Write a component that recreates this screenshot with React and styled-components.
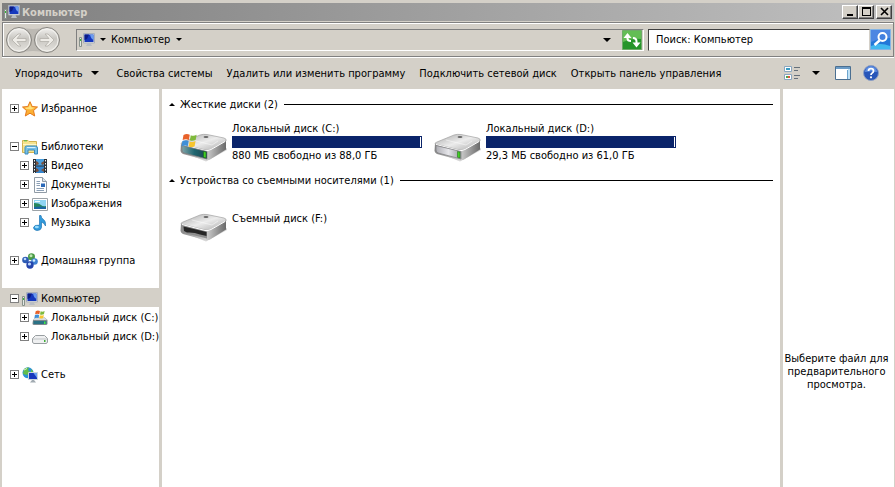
import { useState } from "react";
import styled, { createGlobalStyle } from "styled-components";

const GlobalStyle = createGlobalStyle`
  * {
    box-sizing: border-box;
  }

  body {
    margin: 0;
    background: #d4d0c8;
  }

  body, button, input {
    font-family: "DejaVu Sans Condensed", Tahoma, sans-serif;
    font-size: 11px;
    line-height: 13px;
    color: #000;
  }
`;

const favorites = [{ name: "Избранное", icon: "star" }];
const libraries = [
  { name: "Библиотеки", icon: "library", open: true },
  { name: "Видео", icon: "video", child: true },
  { name: "Документы", icon: "document", child: true },
  { name: "Изображения", icon: "picture", child: true },
  { name: "Музыка", icon: "music", child: true },
];
const homegroup = [{ name: "Домашняя группа", icon: "homegroup" }];
const computer = [
  { name: "Компьютер", icon: "computer", open: true, selected: true },
  { name: "Локальный диск (C:)", icon: "systemDisk", child: true },
  { name: "Локальный диск (D:)", icon: "disk", child: true },
];
const network = [{ name: "Сеть", icon: "network" }];

const tree = [favorites, libraries, homegroup, computer, network];

const commands = [
  "Свойства системы",
  "Удалить или изменить программу",
  "Подключить сетевой диск",
  "Открыть панель управления",
];

const hardDisks = [
  { name: "Локальный диск (C:)", free: "880 МБ свободно из 88,0 ГБ", used: 99.5, kind: "system" },
  { name: "Локальный диск (D:)", free: "29,3 МБ свободно из 61,0 ГБ", used: 99.5, kind: "disk" },
];
const removable = [{ name: "Съемный диск (F:)", kind: "removable" }];

const Flag = () => (
  <g>
    <path d="M2 1.5Q4.500 0 7 1.300L6.300 5Q4 4 1.300 5Z" fill="#e8622a" />
    <path d="M7.800 1.600Q10 2.600 12.500 1.300L11.700 5Q9.500 6 7.100 5.200Z" fill="#7fb93c" />
    <path d="M1.100 5.800Q3.700 4.700 6.100 5.800L5.400 9.400Q3 8.500 .4 9.600Z" fill="#3f8fd8" />
    <path d="M6.900 6.100Q9.300 7 11.600 5.800L10.900 9.400Q8.500 10.600 6.200 9.700Z" fill="#f7c52e" />
  </g>
);

const icons = {
  star: (
    <>
      <path d="M8 .7 10.200 5.500 15.500 6 11.500 9.600 12.700 15 8 12.200 3.300 15 4.500 9.600.5 6 5.800 5.500Z" fill="#fbb034" stroke="#e5791c" />
      <path d="M8 2.800 9.500 6.300 13 6.700 9 8.500 4 8 3 6.700 6.500 6.300Z" fill="#ffe17a" />
    </>
  ),
  library: (
    <>
      <path d="M.5 3.500V1.500H6L7 2.500H14.500V13.500H.5Z" fill="#f6e38d" stroke="#d3b251" />
      <path d="M2 1.800H5" stroke="#49b749" />
      <path d="M1 5.500H14.500" stroke="#fff7c9" />
      <path d="M3 15V8.500Q3 7 4.500 7H13.500Q15.500 7 15.500 9V15H12.500V11H6V15Z" fill="#76bfe6" stroke="#3b8bbd" />
      <path d="M5 8.500H13.500" stroke="#d5f0ff" />
    </>
  ),
  video: (
    <>
      <path d="M1 1H15V15H1Z" fill="#2d3238" />
      <path d="M4 1H12V7.500H4Z" fill="#4aa0e0" />
      <path d="M4 8.500H12V15H4Z" fill="#3486cf" />
      <path d="M4 3 6 4 7 6 5 7H4ZM12 3V6L10 7 9 5ZM4 10 6 11 7 13 5 14H4ZM12 10V14L9 12Z" fill="#77513f" />
      <path d="M2.500 2V15M13.500 2V15" stroke="#eef4f6" strokeDasharray="1.500 1.500" />
    </>
  ),
  document: (
    <>
      <path d="M2.500.5H10.500L14.500 4.500V15.500H2.500Z" fill="#fdfeff" stroke="#909ba5" />
      <path d="M10.500.5V4.500H14.500" fill="#dce5ec" stroke="#909ba5" />
      <path d="M4.500 4.500H8M4.500 6.500H8M4.500 8.500H8M4.500 11.500H12M4.500 13.500H12" stroke="#8b9fb5" />
      <path d="M9 6.500H13V10H9Z" fill="#2968b8" />
    </>
  ),
  picture: (
    <>
      <path d="M.5 2.500H15.500V14.500H.5Z" fill="#fff" stroke="#9ca3a8" />
      <path d="M2 4H14V13H2Z" fill="#8fd5f3" />
      <path d="M2 7Q7 7 9 9T14 10V13H2Z" fill="#25865c" />
      <path d="M2 11Q8 10 14 11V13H2Z" fill="#1a66a2" />
      <path d="M3 5.500H8" stroke="#effaff" />
    </>
  ),
  music: (
    <>
      <path d="M7.500.5H9Q9 3 11.500 4.500T13.500 11Q12.500 8 9.500 7V12.500Q9 15.500 5 15.500 1.500 15 1.500 12.500 2.500 9.500 7.500 10.200Z" fill="#319bdc" stroke="#2075b5" strokeWidth=".7" />
      <ellipse cx="4.800" cy="12" rx="2" ry="1.300" fill="#98dbfb" />
    </>
  ),
  homegroup: (
    <>
      <path d="M4 8 9 4 12 7 9 12Z" fill="none" stroke="#6f98c9" strokeWidth="2" />
      <circle cx="3.500" cy="7" r="3.300" fill="#2d5cb4" />
      <circle cx="9.500" cy="3.700" r="3.500" fill="#4a9a46" />
      <circle cx="12.500" cy="8.500" r="3.300" fill="#3e80d2" />
      <circle cx="8" cy="12" r="3.700" fill="#2444ac" />
      <circle cx="9" cy="2.800" r="1.500" fill="#c0e8b5" />
      <circle cx="3" cy="6" r="1.300" fill="#b9d6fb" />
      <circle cx="7.500" cy="11" r="1.600" fill="#b9d6fb" />
      <circle cx="12" cy="7.500" r="1.300" fill="#d2eaff" />
    </>
  ),
  computer: (
    <>
      <path d="M.5 5.500H2.500V14.500H.5Z" fill="#e3e8e3" stroke="#87918b" />
      <path d="M1.500 7V9" stroke="#36b936" />
      <path d="M4.500 1.500H15.500V11H4.500Z" fill="#e2e5e8" stroke="#abb1b8" />
      <path d="M5.500 2.500H14.500V10H5.500Z" fill="#1638bd" />
      <path d="M5.500 2.500H10L8 7 5.500 8Z" fill="#0c1c86" />
      <path d="M11 2.500H14.500V8Q12 7 11 2.500Z" fill="#6c9df0" />
      <path d="M8.500 11H11.500L13 14H7Z" fill="#b9bec4" />
    </>
  ),
  systemDisk: (
    <>
      <path d="M1 10 4 7H12L15.500 10V14Q15 15 14 15H2Q.5 15 .5 13.500Z" fill="#7e898e" />
      <path d="M1 10 4 7H12L15 10Z" fill="#d8dcdf" />
      <path d="M1.500 11H14.500V14H1.500Z" fill="#2b7185" />
      <path d="M12 11.500H13.500V14H12Z" fill="#42e746" />
      <g transform="translate(2 0) scale(.85)"><Flag /></g>
    </>
  ),
  disk: (
    <>
      <path d="M3.500 6.500H12.500L15.500 9.500V13Q15 14.500 14 14.500H2Q.5 14 .5 13V9.500Z" fill="#eff0f1" stroke="#999ea1" />
      <path d="M1 10H15" stroke="#bfc3c5" />
      <path d="M12 11H13.500V13H12Z" fill="#3fad38" />
    </>
  ),
  network: (
    <>
      <circle cx="6" cy="5.800" r="5.500" fill="#2c93d5" />
      <path d="M2 2Q4 .3 7 .5L6 3 8 5 5 8 1 7ZM9 2 11.500 5 9 6Z" fill="#63bd4a" />
      <path d="M2 3 5 1.500" stroke="#ddf5ca" />
      <path d="M6.500 5.500H15.500V12.500H6.500Z" fill="#1737bd" stroke="#cbd5dd" />
      <path d="M11.500 6H15V11Z" fill="#6ba0f0" />
      <path d="M10 13H12L14 15.500H8Z" fill="#a2abb2" />
    </>
  ),
};

const SmallIcon = ({ name }) => (
  <IconSvg viewBox="0 0 16 16" aria-hidden="true">
    {icons[name]}
  </IconSvg>
);

const DriveIcon = ({ kind }) => (
  <DriveSvg viewBox="0 0 48 29" $raised={kind !== "removable"} aria-hidden="true">
    <defs>
      <linearGradient id={`top-${kind}`} x1="0" y1="0" x2="1" y2="1">
        <stop offset="0" stopColor="#a8a8a8" />
        <stop offset=".5" stopColor="#ececec" />
        <stop offset="1" stopColor="#aaa" />
      </linearGradient>
      <linearGradient id={`side-${kind}`}>
        <stop offset="0" stopColor="#888" />
        <stop offset=".55" stopColor="#d2d2d2" />
        <stop offset="1" stopColor="#6a6a6a" />
      </linearGradient>
      <linearGradient id={`front-${kind}`}>
        <stop offset="0" stopColor={kind === "system" ? "#7fa3a8" : "#aeaeb4"} />
        <stop offset=".5" stopColor={kind === "system" ? "#1f6670" : "#e6e6ea"} />
        <stop offset="1" stopColor={kind === "system" ? "#1c444c" : "#9c9ca4"} />
      </linearGradient>
    </defs>
    <path d="M2 19 26 28.500 47 17V15L28 25Z" fill="#bbb" opacity=".6" />
    <path d="M1 10.500 28 15 46 7.500V16.500L30 26.500Q28 27.500 25 27L3 21Q1 20 .5 18Z" fill={`url(#side-${kind})`} />
    <path d="M1 11Q1 9.500 3 9L20 2Q23 1 27 1.500L44 5Q47 6 46 8L31 16.500Q28 18 25 17Z" fill={`url(#top-${kind})`} stroke="#a2a2a2" strokeWidth=".7" />
    <path d="M2 11.500 25 17.500Q28 18 31 16.500L45 8.500" fill="none" stroke="#fff" />
    <path d="M12 7 32 12 38 8" fill="none" stroke="#fff" strokeWidth=".6" opacity=".8" />
    <ellipse cx="26" cy="4" rx="2.500" ry="1" fill="#666" />
    {kind === "removable" ? (
      <>
        <path d="M2 12.500 27 18.500V25.500L4 20Q2 19 2 17Z" fill="#8d8d8d" />
        <path d="M3.500 13.500 26.500 19V23L20 21.500Q14 19 7 19.500L4 18Z" fill="#262626" />
      </>
    ) : (
      <>
        <path d="M2 12.500 27 18.500V26L4 20Q2 19 2 17Z" fill={`url(#front-${kind})`} stroke="#7c7c80" strokeWidth=".7" />
        <path d="M23.500 18.500 26 19V25L23.500 24.300Z" fill="#42cf24" stroke="#1a6514" strokeWidth=".5" />
      </>
    )}
    {kind === "system" && <g transform="translate(1 0) scale(1.250 1.400)"><Flag /></g>}
  </DriveSvg>
);

const Triangle = ({ size = 8, up }) => (
  <TriangleSvg $size={size} viewBox="0 0 8 4" aria-hidden="true">
    <path d={up ? "M0 4 4 0 8 4Z" : "M0 0H8L4 4Z"} />
  </TriangleSvg>
);

const TravelIcon = () => (
  <svg width="57" height="28" viewBox="0 0 57 28" aria-hidden="true">
    <defs>
      <linearGradient id="travel" x2="0" y2="1">
        <stop offset="0" stopColor="#f3f2f0" />
        <stop offset=".45" stopColor="#c8c6c1" />
        <stop offset="1" stopColor="#e6e4df" />
      </linearGradient>
    </defs>
    <path d="M14 1Q28 5 42 1V27Q28 23 14 27Z" fill="#bcb9b3" />
    {[14, 42].map((x) => (
      <g key={x}>
        <circle cx={x} cy="14" r="12.500" fill="url(#travel)" stroke="#85837e" />
        <circle cx={x} cy="14" r="11" fill="none" stroke="#f3f2ee" />
      </g>
    ))}
    <g fill="#eeece7" stroke="#b3b0a9" strokeWidth=".8">
      <path d="M7 14 13 8H16L12 12.500H21V15.500H12L16 20H13Z" />
      <path d="M49 14 43 8H40L44 12.500H35V15.500H44L40 20H43Z" />
    </g>
  </svg>
);

const TreeRow = ({ item }) => {
  const [open, setOpen] = useState(Boolean(item.open));

  return (
    <Row $selected={item.selected} $child={item.child}>
      <Expander
        type="button"
        aria-label={item.name}
        aria-expanded={open}
        onClick={() => setOpen(!open)}
      >
        <svg width="7" height="7" viewBox="0 0 7 7" shapeRendering="crispEdges">
          <path d={open ? "M1 3H6V4H1Z" : "M1 3H3V1H4V3H6V4H4V6H3V4H1Z"} />
        </svg>
      </Expander>
      <RowLink href="#">
        <SmallIcon name={item.icon} />
        {item.name}
      </RowLink>
    </Row>
  );
};

const DriveSection = ({ title, drives, roomy }) => (
  <section>
    <SectionHeader>
      <SectionToggle type="button" aria-expanded="true">
        <Triangle size={6} up />
        {title}
      </SectionToggle>
      <Rule />
    </SectionHeader>
    <Drives $roomy={roomy}>
      {drives.map((drive) => (
        <Drive key={drive.name}>
          <DriveIcon kind={drive.kind} />
          <DriveInfo>
            <div>{drive.name}</div>
            {drive.free && (
              <>
                <Meter>
                  <MeterFill style={{ width: `${drive.used}%` }} />
                </Meter>
                <div>{drive.free}</div>
              </>
            )}
          </DriveInfo>
        </Drive>
      ))}
    </Drives>
  </section>
);

export default function App() {
  return (
    <Window>
      <GlobalStyle />
      <TitleBar>
        <SmallIcon name="computer" />
        <Title>Компьютер</Title>
        <CaptionButton type="button" aria-label="Свернуть">
          <svg width="11" height="10" shapeRendering="crispEdges"><path d="M2 7H8V9H2Z" /></svg>
        </CaptionButton>
        <CaptionButton type="button" aria-label="Развернуть">
          <svg width="11" height="10" shapeRendering="crispEdges"><path d="M1 0H10V9H1ZM2 2V8H9V2Z" fillRule="evenodd" /></svg>
        </CaptionButton>
        <CaptionButton type="button" aria-label="Закрыть" $apart>
          <svg width="11" height="10"><path d="M2 1 9 8M9 1 2 8" stroke="#000" strokeWidth="1.600" /></svg>
        </CaptionButton>
      </TitleBar>

      <NavBar>
        <TravelButton type="button" aria-label="Назад и вперед">
          <TravelIcon />
        </TravelButton>
        <AddressBar>
          <SmallIcon name="computer" />
          <Crumb type="button" aria-label="Путь"><Triangle size={6} /></Crumb>
          <Crumb type="button">Компьютер <Triangle size={6} /></Crumb>
          <History type="button" aria-label="Предыдущие расположения"><Triangle /></History>
          <IconButton type="button" aria-label="Обновить">
            <svg width="20" height="20" viewBox="0 0 20 20">
              <path d="M.5.5H19.500V19.500H.5Z" fill="#26952a" stroke="#6eaa68" />
              <path d="M1 1H19V9Q10 8 1 12Z" fill="#63bd55" />
              <g fill="none" stroke="#fff" strokeWidth="2">
                <path d="M5.500 6V8.500Q5.500 11 9 11" />
                <path d="M14.500 14V11.500Q14.500 8 11 8" />
              </g>
              <path d="M1.500 8 5.500 3 9.500 8ZM10.500 12.500H18.500L14.500 17.500Z" fill="#fff" />
            </svg>
          </IconButton>
        </AddressBar>
        <Search>
          <SearchInput type="text" aria-label="Поиск" defaultValue="Поиск: Компьютер" />
          <IconButton type="button" aria-label="Найти">
            <svg width="21" height="21" viewBox="0 0 21 21">
              <path d="M.5.5H20.500V20.500H.5Z" fill="#2377d8" stroke="#83b4e5" />
              <path d="M1 1H20V9Q10 9 1 13Z" fill="#4c86e2" />
              <path d="M1 17Q10 13 20 17V20H1Z" fill="#41b8ef" />
              <path d="M9.500 11.500 4.500 16" stroke="#fff" strokeWidth="2.500" />
              <circle cx="12.500" cy="8" r="4" fill="#4380df" stroke="#fff" strokeWidth="2" />
            </svg>
          </IconButton>
        </Search>
      </NavBar>

      <Toolbar>
        <Command type="button" $menu>Упорядочить <Triangle /></Command>
        {commands.map((command) => (
          <Command type="button" key={command}>{command}</Command>
        ))}
        <Tools>
          <IconButton type="button" aria-label="Вид">
            <svg width="16" height="16" viewBox="0 0 16 16">
              <path d="M.5 1.500H7.500V6.500H.5ZM.5 9.500H7.500V14.500H.5Z" fill="#fff" stroke="#8aa6bf" />
              <path d="M2 3H6V5H2Z" fill="#3a9cc4" />
              <path d="M2 11H4V13H2Z" fill="#4ca64d" /><path d="M4 11H6V13H4Z" fill="#e25537" />
              <path d="M10 2.500H16M10 5.500H14M10 10.500H16M10 13.500H14" stroke="#65707b" />
            </svg>
          </IconButton>
          <IconButton type="button" aria-label="Другие виды"><Triangle /></IconButton>
          <PreviewToggle type="button" aria-label="Область просмотра">
            <svg width="16" height="14" viewBox="0 0 16 14">
              <path d="M.5.5H15.500V13.500H.5Z" fill="#fff" stroke="#4b6f91" />
              <path d="M1 1H15V3H1Z" fill="#6b9bc6" />
              <path d="M12.500 4V13" stroke="#6da5ce" />
              <path d="M13 3H15V13H13Z" fill="#bfe1f6" />
            </svg>
          </PreviewToggle>
          <IconButton type="button" aria-label="Справка">
            <svg width="16" height="16" viewBox="0 0 16 16">
              <circle cx="8" cy="8" r="7.500" fill="#2856b9" stroke="#8d9fc4" />
              <path d="M2 7A6 6 0 0 1 14 7Q8 6 2 7Z" fill="#5d8de0" />
              <path d="M5.500 6Q5.500 3.700 8 3.700T10.500 6Q10.500 7.200 9.200 8 8 8.600 8 10" fill="none" stroke="#fff" strokeWidth="1.800" />
              <circle cx="8" cy="12.300" r="1.100" fill="#fff" />
            </svg>
          </IconButton>
        </Tools>
      </Toolbar>

      <Body>
        <Sidebar>
          {tree.map((group) => (
            <TreeGroup key={group[0].name}>
              {group.map((item) => <TreeRow key={item.name} item={item} />)}
            </TreeGroup>
          ))}
        </Sidebar>
        <Content>
          <DriveSection title="Жесткие диски (2)" drives={hardDisks} />
          <DriveSection title="Устройства со съемными носителями (1)" drives={removable} roomy />
        </Content>
        <Preview>Выберите файл для предварительного просмотра.</Preview>
      </Body>
    </Window>
  );
}

const Window = styled.div`
  display: flex;
  flex-direction: column;
  min-height: 100vh;
  padding: 3px 1px 0 2px;
  background: #d4d0c8;
`;

const IconSvg = styled.svg`
  flex: none;
  width: 16px;
  height: 16px;
`;

const TriangleSvg = styled.svg`
  flex: none;
  width: ${(p) => p.$size}px;
  height: ${(p) => p.$size / 2}px;
`;

const PlainButton = styled.button`
  display: flex;
  align-items: center;
  padding: 0;
  border: 0;
  background: none;
  white-space: nowrap;
`;

const TitleBar = styled.header`
  display: flex;
  align-items: center;
  height: 18px;
  padding: 0 2px;
  background: linear-gradient(to right, #808080, #c0c0c0);
`;

const Title = styled.h1`
  flex: 1;
  margin: 0 0 0 2px;
  font-size: 11px;
  color: #d4d0c8;
`;

const CaptionButton = styled(PlainButton)`
  justify-content: center;
  width: 16px;
  height: 14px;
  margin-left: ${(p) => (p.$apart ? 2 : 0)}px;
  border: 1px solid;
  border-color: #fff #404040 #404040 #fff;
  box-shadow: inset -1px -1px #808080;
  background: #d4d0c8;
`;

const NavBar = styled.nav`
  display: flex;
  align-items: center;
  height: 35px;
  margin-top: 1px;
  padding: 0 2px;
  border: 1px solid #808080;
  box-shadow: inset 1px 1px #fff, 0 1px #fff;
`;

const TravelButton = styled(PlainButton)`
  margin-right: 14px;
`;

const AddressBar = styled.div`
  display: flex;
  flex: 1;
  align-items: center;
  height: 22px;
  padding: 0 1px 0 2px;
  border: 1px solid;
  border-color: #808080 #fff #fff #808080;
`;

const Crumb = styled(PlainButton)`
  gap: 6px;
  margin-left: 5px;
`;

const History = styled(PlainButton)`
  margin: 0 11px 0 auto;
`;

const IconButton = styled(PlainButton)`
  flex: none;
`;

const Search = styled.div`
  display: flex;
  align-items: center;
  width: 243px;
  margin-left: 4px;
`;

const SearchInput = styled.input`
  flex: 1;
  min-width: 0;
  height: 22px;
  padding: 0 7px;
  border: 1px solid;
  border-color: #404040 #d4d0c8 #d4d0c8 #404040;
  border-radius: 0;
  background: #fff;
  outline: none;
`;

const Toolbar = styled.div`
  display: flex;
  align-items: center;
  gap: 14px;
  height: 32px;
  padding: 0 15px 0 13px;
`;

const Command = styled(PlainButton)`
  gap: 8px;
  margin-right: ${(p) => (p.$menu ? 4 : 0)}px;
`;

const Tools = styled.div`
  display: flex;
  align-items: center;
  gap: 12px;
  margin-left: auto;
`;

const PreviewToggle = styled(PlainButton)`
  margin-left: 3px;
`;

const Body = styled.div`
  display: flex;
  flex: 1;
  gap: 3px;
`;

const Sidebar = styled.aside`
  display: flex;
  flex: none;
  flex-direction: column;
  gap: 19px;
  width: 157px;
  padding-top: 9px;
  background: #fff;
`;

const TreeGroup = styled.ul`
  margin: 0;
  padding: 0;
  list-style: none;
`;

const Row = styled.li`
  display: flex;
  align-items: center;
  gap: 3px;
  height: 19px;
  padding: 2px 0 0 ${(p) => (p.$child ? 18 : 8)}px;
  background: ${(p) => (p.$selected ? "#d4d0c8" : "none")};
`;

const Expander = styled(PlainButton)`
  flex: none;
  justify-content: center;
  width: 9px;
  height: 9px;
  border: 1px solid #808080;
  background: #fff;
`;

const RowLink = styled.a`
  display: flex;
  align-items: center;
  gap: 3px;
  color: #000;
  text-decoration: none;
  white-space: nowrap;
`;

const Content = styled.main`
  flex: 1;
  min-width: 0;
  padding: 5px 7px 0 7px;
  background: #fff;
`;

const SectionHeader = styled.h2`
  display: flex;
  align-items: center;
  gap: 6px;
  height: 20px;
  margin: 0;
  font-weight: normal;
`;

const SectionToggle = styled(PlainButton)`
  gap: 5px;
`;

const Rule = styled.span`
  flex: 1;
  height: 1px;
  background: #000;
`;

const Drives = styled.div`
  display: flex;
  flex-wrap: wrap;
  min-height: 56px;
  padding: ${(p) => (p.$roomy ? 22 : 8)}px 0 0 11px;
`;

const Drive = styled.article`
  display: flex;
  gap: 4px;
  width: 254px;
`;

const DriveSvg = styled.svg`
  flex: none;
  width: 48px;
  height: 29px;
  margin-top: ${(p) => (p.$raised ? 11 : 1)}px;
`;

const DriveInfo = styled.div`
  width: 190px;
`;

const Meter = styled.div`
  height: 12px;
  margin: 1px 0;
  border: 1px solid #0a246a;
  background: #fff;
`;

const MeterFill = styled.div`
  height: 100%;
  background: #0a246a;
`;

const Preview = styled.aside`
  display: flex;
  flex: none;
  align-items: center;
  justify-content: center;
  width: 111px;
  padding: 166px 4px 0 0;
  background: #fff;
  text-align: center;
`;
